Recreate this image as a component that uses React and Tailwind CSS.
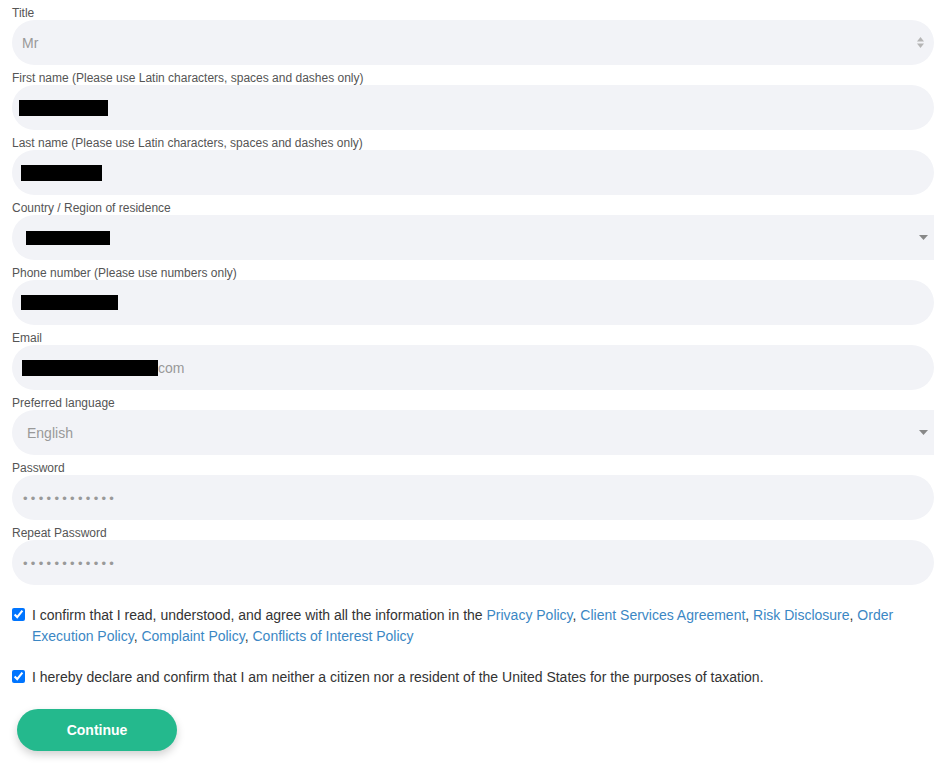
import { useState } from 'react';

const fieldBase = 'flex h-[45px] items-center bg-[#f2f3f7] pt-[2px] text-[14px]';

function Label({ children }) {
  return <div className="h-[20px] pt-[7px] text-[12px] leading-[13px] text-[#555]">{children}</div>;
}

function Redacted({ w, ml }) {
  return <span className={`-mt-[2px] block h-[16px] bg-black ${w} ${ml}`} />;
}

function Caret() {
  return (
    <svg width="9" height="5" viewBox="0 0 9 5" className="-mt-[2px] ml-auto mr-[6px]">
      <path d="M0 0h9L4.5 5z" fill="#888" />
    </svg>
  );
}

function Spinner() {
  return (
    <svg width="7" height="11" viewBox="0 0 7 11" className="-mt-[2px] ml-auto mr-[6px]">
      <path d="M3.5 0L7 4.5H0z" fill="#b5b5b5" />
      <path d="M0 6.5h7L3.5 11z" fill="#b5b5b5" />
    </svg>
  );
}

function Dots() {
  return <span className="text-[13px] tracking-[3.3px] text-[#999]">••••••••••••</span>;
}

export default function App() {
  const [a, setA] = useState(true);
  const [b, setB] = useState(true);

  return (
    <div className="min-h-screen bg-white px-[12px] font-['Liberation_Sans',Arial,sans-serif]">
      <Label>Title</Label>
      <div className={`${fieldBase} rounded-full pl-[10px] pr-[4px]`}>
        <span className="text-[#999]">Mr</span>
        <Spinner />
      </div>

      <Label>First name (Please use Latin characters, spaces and dashes only)</Label>
      <div className={`${fieldBase} rounded-full`}>
        <Redacted w="w-[89px]" ml="ml-[7px]" />
      </div>

      <Label>Last name (Please use Latin characters, spaces and dashes only)</Label>
      <div className={`${fieldBase} rounded-full`}>
        <Redacted w="w-[81px]" ml="ml-[9px]" />
      </div>

      <Label>Country / Region of residence</Label>
      <div className={`${fieldBase} rounded-l-full`}>
        <span className="-mt-[2px] ml-[14px] block h-[14px] w-[84px] bg-black" />
        <Caret />
      </div>

      <Label>Phone number (Please use numbers only)</Label>
      <div className={`${fieldBase} rounded-full`}>
        <span className="-mt-[2px] ml-[9px] block h-[15px] w-[97px] bg-black" />
      </div>

      <Label>Email</Label>
      <div className={`${fieldBase} rounded-full`}>
        <Redacted w="w-[136px]" ml="ml-[10px]" />
        <span className="text-[#999]">com</span>
      </div>

      <Label>Preferred language</Label>
      <div className={`${fieldBase} rounded-l-full pl-[15px]`}>
        <span className="text-[#999]">English</span>
        <Caret />
      </div>

      <Label>Password</Label>
      <div className={`${fieldBase} rounded-full pl-[11px]`}>
        <Dots />
      </div>

      <Label>Repeat Password</Label>
      <div className={`${fieldBase} rounded-full pl-[11px]`}>
        <Dots />
      </div>

      <label className="mt-[20px] flex items-start gap-[7px] text-[14px] leading-[21px] text-[#333]">
        <input
          type="checkbox"
          checked={a}
          onChange={() => setA(!a)}
          className="mt-[3px] h-[13px] w-[13px] shrink-0 accent-[#0075ff]"
        />
        <span>
          I confirm that I read, understood, and agree with all the information in the{' '}
          <a className="text-[#3b87c4]">Privacy Policy</a>, <a className="text-[#3b87c4]">Client Services Agreement</a>,{' '}
          <a className="text-[#3b87c4]">Risk Disclosure</a>, <a className="text-[#3b87c4]">Order Execution Policy</a>,{' '}
          <a className="text-[#3b87c4]">Complaint Policy</a>, <a className="text-[#3b87c4]">Conflicts of Interest Policy</a>
        </span>
      </label>

      <label className="mt-[20px] flex items-start gap-[7px] text-[14px] leading-[21px] text-[#333]">
        <input
          type="checkbox"
          checked={b}
          onChange={() => setB(!b)}
          className="mt-[3px] h-[13px] w-[13px] shrink-0 accent-[#0075ff]"
        />
        <span>I hereby declare and confirm that I am neither a citizen nor a resident of the United States for the purposes of taxation.</span>
      </label>

      <button className="ml-[5px] mt-[21px] h-[42px] w-[160px] rounded-full bg-[#24b98d] text-[14px] font-bold text-white shadow-[0_4px_8px_rgba(0,0,0,0.18)]">
        Continue
      </button>
    </div>
  );
}
